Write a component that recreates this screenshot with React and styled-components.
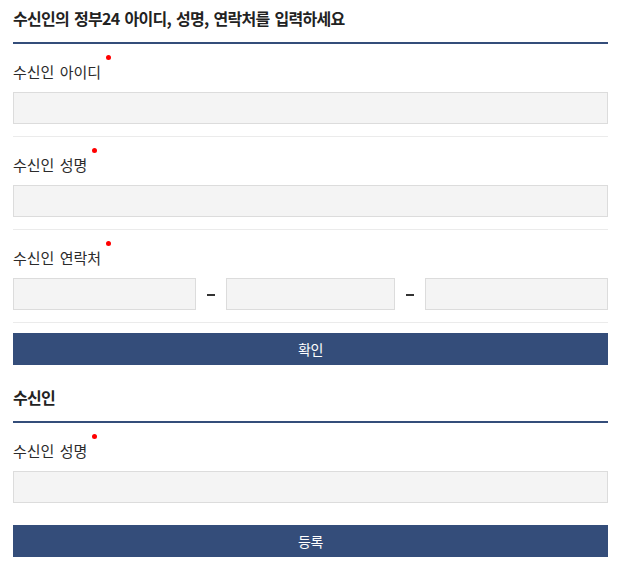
import React from "react";
import styled, { createGlobalStyle } from "styled-components";

const GlobalStyle = createGlobalStyle`
  html, body {
    margin: 0;
    padding: 0;
    background: #ffffff;
  }
  body {
    font-family: "Noto Sans CJK KR", "Noto Sans", sans-serif;
    color: #333333;
  }
  * { box-sizing: border-box; }
`;

const Page = styled.div`
  padding: 0 12px 0 13px;
`;

const SectionTitle = styled.h2`
  margin: ${(p) => (p.$first ? "0" : "14px")} 0 0;
  padding: 6px 0 11px;
  font-size: 16px;
  line-height: 25px;
  font-weight: 700;
  letter-spacing: -0.7px;
  word-spacing: 2px;
  color: #222222;
  border-bottom: 2px solid #344d7a;
`;

const Field = styled.div`
  padding: 18px 0 12px;
  border-bottom: ${(p) => (p.$last ? "none" : "1px solid #ebebeb")};
`;

const Label = styled.label`
  position: relative;
  display: block;
  width: fit-content;
  font-size: 15px;
  line-height: 20px;
  letter-spacing: 0;
  word-spacing: 2px;
  color: #2b2b2b;
  margin-bottom: 10px;

  &::after {
    content: "";
    position: absolute;
    top: -7px;
    right: -10px;
    width: 5px;
    height: 5px;
    border-radius: 50%;
    background: #ff0000;
  }
`;

const Input = styled.input`
  display: block;
  width: 100%;
  height: 32px;
  margin: 0;
  padding: 0 10px;
  background: #f4f4f4;
  border: 1px solid #dcdcdc;
  font-family: inherit;
  font-size: 14px;
  outline: none;
`;

const PhoneRow = styled.div`
  display: grid;
  grid-template-columns: 183px 30px 1fr 30px 183px;
  align-items: center;
`;

const Dash = styled.span`
  display: flex;
  justify-content: center;
  align-items: center;
  height: 32px;
  padding-top: 2px;

  &::before {
    content: "";
    width: 8px;
    height: 2px;
    background: #333333;
  }
`;

const Button = styled.button`
  display: block;
  width: 100%;
  height: 32px;
  margin-top: 10px;
  padding: 0;
  border: none;
  background: #344d7a;
  color: #ffffff;
  font-family: inherit;
  font-size: 14px;
  letter-spacing: -0.3px;
  cursor: pointer;
  box-shadow: ${(p) => (p.$underline ? "0 1px 0 #e6ecf4" : "none")};
`;

export default function App() {
  return (
    <>
      <GlobalStyle />
      <Page>
        <SectionTitle $first>수신인의 정부24 아이디, 성명, 연락처를 입력하세요</SectionTitle>

        <Field>
          <Label>수신인 아이디</Label>
          <Input type="text" />
        </Field>

        <Field>
          <Label>수신인 성명</Label>
          <Input type="text" />
        </Field>

        <Field>
          <Label>수신인 연락처</Label>
          <PhoneRow>
            <Input type="text" />
            <Dash aria-label="-" />
            <Input type="text" />
            <Dash aria-label="-" />
            <Input type="text" />
          </PhoneRow>
        </Field>

        <Button type="button">확인</Button>

        <SectionTitle>수신인</SectionTitle>

        <Field $last>
          <Label>수신인 성명</Label>
          <Input type="text" />
        </Field>

        <Button type="button" $underline>등록</Button>
      </Page>
    </>
  );
}
